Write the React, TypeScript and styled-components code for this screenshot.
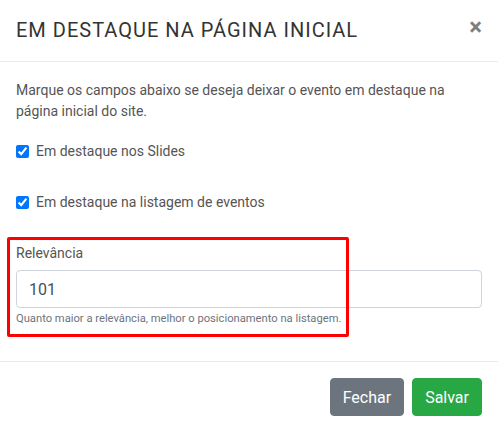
import React from "react";
import styled, { createGlobalStyle } from "styled-components";

const Global = createGlobalStyle`
  html, body { margin: 0; padding: 0; background: #fff; }
  body { font-family: Roboto, "Liberation Sans", sans-serif; color: #555; }
  * { box-sizing: border-box; }
`;

const Modal = styled.div`
  width: 498px;
  height: 424px;
  background: #fff;
  display: flex;
  flex-direction: column;
  position: relative;
`;

const Header = styled.div`
  display: flex;
  align-items: center;
  justify-content: space-between;
  height: 62px;
  padding: 0 16px;
  border-bottom: 1px solid #e9ecef;
`;

const Title = styled.h5`
  margin: 0;
  font-size: 20px;
  font-weight: 400;
  letter-spacing: 1px;
  color: #333;
  line-height: 24px;
  padding-bottom: 2px;
`;

const Close = styled.button`
  border: 0;
  background: transparent;
  padding: 0;
  font-family: Roboto, "Liberation Sans", sans-serif;
  font-size: 24px;
  font-weight: 700;
  line-height: 1;
  color: #000;
  opacity: 0.5;
  cursor: pointer;
  margin-right: 0;
  margin-bottom: 8px;
`;

const Body = styled.div`
  padding: 18px 16px 0;
  flex: 1;
  position: relative;
`;

const Intro = styled.p`
  margin: 0 0 19px;
  font-size: 14px;
  line-height: 21px;
  color: #555;
`;

const CheckRow = styled.label`
  display: flex;
  align-items: center;
  gap: 7px;
  font-size: 14px;
  line-height: 21px;
  color: #555;
  margin-bottom: 30px;
  input {
    margin: 0;
    width: 13px;
    height: 13px;
    accent-color: #0075ff;
  }
`;

const Field = styled.div`
  margin-top: 1px;
`;

const Label = styled.div`
  font-size: 14px;
  line-height: 21px;
  color: #555;
  margin-bottom: 6px;
`;

const Input = styled.input`
  display: block;
  width: 100%;
  height: 38px;
  padding: 6px 12px;
  font-family: Roboto, "Liberation Sans", sans-serif;
  font-size: 16px;
  color: #495057;
  border: 1px solid #ced4da;
  border-radius: 4px;
  outline: none;
`;

const Help = styled.small`
  display: block;
  margin-top: 4px;
  font-size: 11.2px;
  line-height: 14px;
  color: #6c757d;
`;

const Highlight = styled.div`
  position: absolute;
  left: 7px;
  top: 237px;
  width: 342px;
  height: 100px;
  border: 3px solid #f00;
  border-radius: 2px;
  pointer-events: none;
`;

const Footer = styled.div`
  display: flex;
  justify-content: flex-end;
  gap: 8px;
  padding: 16px 16px 8px;
  border-top: 1px solid #e9ecef;
`;

const Button = styled.button<{ $variant: "secondary" | "success" }>`
  height: 38px;
  padding: 0 12px;
  border: 1px solid ${(p) => (p.$variant === "success" ? "#28a745" : "#6c757d")};
  background: ${(p) => (p.$variant === "success" ? "#28a745" : "#6c757d")};
  color: #fff;
  font-family: Roboto, "Liberation Sans", sans-serif;
  font-size: 16px;
  border-radius: 4px;
  cursor: pointer;
`;

export default function App() {
  return (
    <>
      <Global />
      <Modal>
        <Header>
          <Title>EM DESTAQUE NA PÁGINA INICIAL</Title>
          <Close aria-label="Fechar">×</Close>
        </Header>
        <Body>
          <Intro>
            Marque os campos abaixo se deseja deixar o evento em destaque na página inicial do site.
          </Intro>
          <CheckRow>
            <input type="checkbox" defaultChecked />
            Em destaque nos Slides
          </CheckRow>
          <CheckRow>
            <input type="checkbox" defaultChecked />
            Em destaque na listagem de eventos
          </CheckRow>
          <Field>
            <Label>Relevância</Label>
            <Input defaultValue="101" />
            <Help>Quanto maior a relevância, melhor o posicionamento na listagem.</Help>
          </Field>
        </Body>
        <Footer>
          <Button $variant="secondary">Fechar</Button>
          <Button $variant="success">Salvar</Button>
        </Footer>
        <Highlight />
      </Modal>
    </>
  );
}
